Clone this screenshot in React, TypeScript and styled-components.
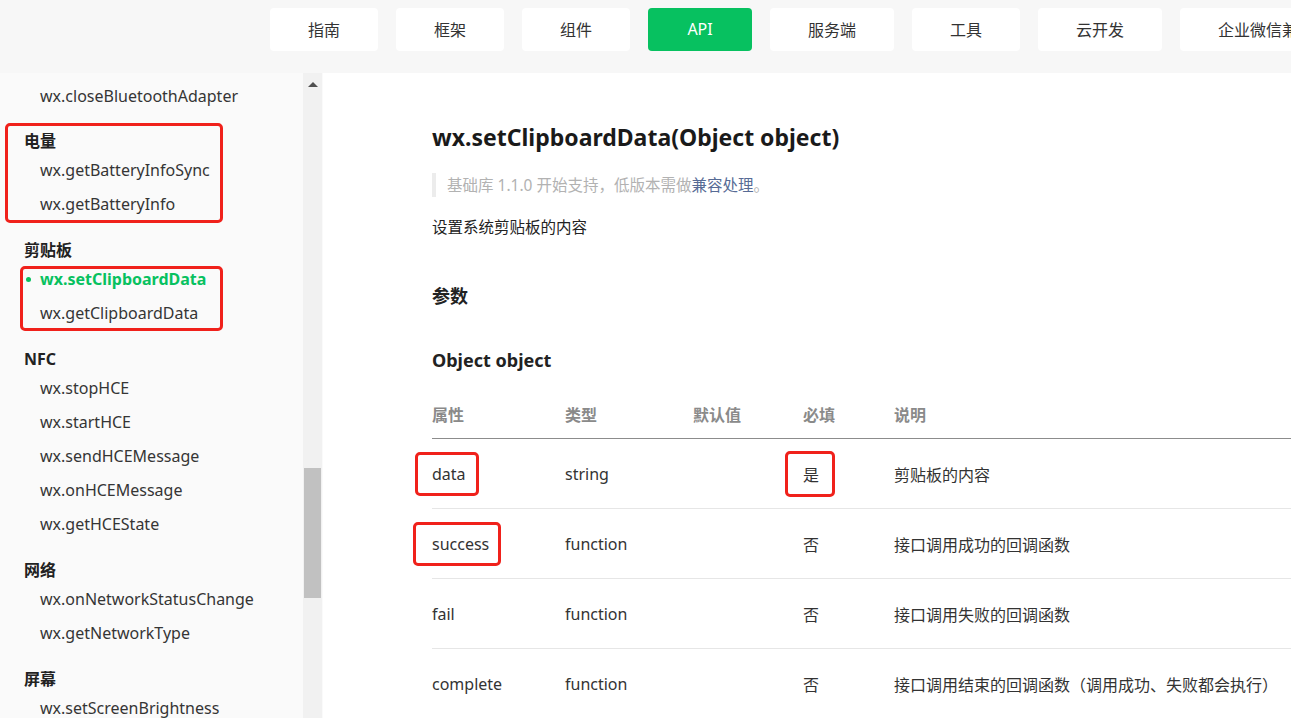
import React from 'react';
import styled, {createGlobalStyle} from 'styled-components';

const GlobalStyle = createGlobalStyle`
  html, body {
    margin: 0;
    padding: 0;
    background: #fff;
  }
  body {
    font-family: "Noto Sans", "Noto Sans CJK SC", sans-serif;
    color: #333;
    overflow: hidden;
  }
`;

const Page = styled.div`
  width: 1291px;
  height: 718px;
  display: flex;
  flex-direction: column;
  overflow: hidden;
`;

const TopNav = styled.nav`
  height: 73px;
  flex: none;
  background: #f7f7f7;
  display: flex;
  align-items: flex-start;
  gap: 18px;
  padding: 8px 0 0 270px;
  box-sizing: border-box;
  white-space: nowrap;
  overflow: hidden;
`;

const NavButton = styled.div<{$active?: boolean}>`
  flex: none;
  height: 43px;
  min-width: 104px;
  padding: 0 38px 1px;
  box-sizing: border-box;
  border-radius: 4px;
  display: flex;
  align-items: center;
  justify-content: center;
  font-size: 16px;
  background: ${p => (p.$active ? '#07c160' : '#fff')};
  color: ${p => (p.$active ? '#fff' : '#333')};
`;

const Body = styled.div`
  flex: 1;
  display: flex;
  min-height: 0;
`;

const SideWrap = styled.aside`
  flex: none;
  width: 323px;
  display: flex;
  background: #fafafa;
  position: relative;
`;

const SideList = styled.div`
  flex: 1;
  padding-top: 6px;
  overflow: hidden;
`;

const Group = styled.div`
  & + & {
    margin-top: 17px;
  }
  &:nth-child(2) {
    margin-top: 16px;
  }
`;

const GroupTitle = styled.div`
  height: 24px;
  line-height: 24px;
  padding-left: 24px;
  font-size: 16px;
  font-weight: 700;
  color: #222;
`;

const Item = styled.div<{$active?: boolean}>`
  height: 34px;
  line-height: 34px;
  padding-left: 40px;
  font-size: 16px;
  position: relative;
  color: ${p => (p.$active ? '#07c160' : '#353535')};
  font-weight: ${p => (p.$active ? 700 : 400)};

  ${p =>
    p.$active &&
    `&::before {
      content: "";
      position: absolute;
      left: 26px;
      top: 15px;
      width: 5px;
      height: 5px;
      border-radius: 50%;
      background: #07c160;
    }`}
`;

const ScrollTrack = styled.div`
  flex: none;
  width: 19px;
  margin-right: 1px;
  background: #f1f1f1;
  display: flex;
  flex-direction: column;
  align-items: center;
`;

const ScrollArrow = styled.div`
  margin-top: 9px;
  width: 0;
  height: 0;
  border-left: 5px solid transparent;
  border-right: 5px solid transparent;
  border-bottom: 5px solid #505050;
`;

const ScrollThumb = styled.div`
  margin-top: 381px;
  width: 17px;
  height: 130px;
  background: #c1c1c1;
`;

const RedBox = styled.div<{$top: number; $left: number; $w: number; $h: number}>`
  position: absolute;
  top: ${p => p.$top}px;
  left: ${p => p.$left}px;
  width: ${p => p.$w}px;
  height: ${p => p.$h}px;
  border: 3px solid #f0211b;
  border-radius: 5px;
  box-sizing: border-box;
  pointer-events: none;
`;

const Main = styled.main`
  flex: 1;
  min-width: 0;
  overflow: hidden;
  background: #fff;
  padding: 48px 0 0 109px;
`;

const Title = styled.h1`
  margin: 0;
  font-size: 23px;
  line-height: 32px;
  font-weight: 700;
  color: #1a1a1a;
  white-space: nowrap;
`;

const Quote = styled.div`
  margin-top: 20px;
  border-left: 4px solid #ececec;
  padding-left: 11px;
  height: 24px;
  line-height: 24px;
  font-size: 15.5px;
  color: #b2b2b2;
`;

const Link = styled.span`
  color: #576b95;
`;

const Desc = styled.p`
  margin: 18px 0 0;
  font-size: 15.5px;
  line-height: 24px;
  color: #222;
`;

const SubHead = styled.h2<{$gap: number}>`
  margin: ${p => p.$gap}px 0 0;
  font-size: 18px;
  line-height: 28px;
  font-weight: 700;
  color: #222;
`;

const Table = styled.div`
  margin-top: 16px;
  width: 1000px;
`;

const Row = styled.div<{$head?: boolean}>`
  display: grid;
  grid-template-columns: 133px 128px 110px 91px 1fr;
  align-items: center;
  height: ${p => (p.$head ? '48px' : '69px')};
  border-bottom: ${p => (p.$head ? '1px solid #8c8c8c' : '1px solid #e6e6e6')};
  font-size: 16px;
  font-weight: ${p => (p.$head ? 600 : 400)};
  color: ${p => (p.$head ? '#8a8a8a' : '#333')};
  white-space: nowrap;
`;

const Cell = styled.div``;

const Marked = styled.span<{$l: number; $r: number}>`
  display: inline-block;
  margin-left: -${p => p.$l + 3}px;
  padding: 8px ${p => p.$r}px 8px ${p => p.$l}px;
  border: 3px solid #f0211b;
  border-radius: 5px;
`;

const navs = ['指南', '框架', '组件', 'API', '服务端', '工具', '云开发', '企业微信兼容'];

const groups = [
  {title: '', items: ['wx.closeBluetoothAdapter']},
  {title: '电量', items: ['wx.getBatteryInfoSync', 'wx.getBatteryInfo']},
  {title: '剪贴板', items: ['wx.setClipboardData', 'wx.getClipboardData']},
  {title: 'NFC', items: ['wx.stopHCE', 'wx.startHCE', 'wx.sendHCEMessage', 'wx.onHCEMessage', 'wx.getHCEState']},
  {title: '网络', items: ['wx.onNetworkStatusChange', 'wx.getNetworkType']},
  {title: '屏幕', items: ['wx.setScreenBrightness']},
];

const rows = [
  {name: 'data', type: 'string', req: '是', desc: '剪贴板的内容'},
  {name: 'success', type: 'function', req: '否', desc: '接口调用成功的回调函数'},
  {name: 'fail', type: 'function', req: '否', desc: '接口调用失败的回调函数'},
  {name: 'complete', type: 'function', req: '否', desc: '接口调用结束的回调函数（调用成功、失败都会执行）'},
];

// red annotation boxes around some cells: [left pad, right pad]
const marks: Record<string, [number, number]> = {
  data: [14, 10],
  success: [16, 9],
};

export default function App() {
  return (
    <Page>
      <GlobalStyle />
      <TopNav>
        {navs.map(n => (
          <NavButton key={n} $active={n === 'API'}>{n}</NavButton>
        ))}
      </TopNav>
      <Body>
        <SideWrap>
          <SideList>
            {groups.map((g, i) => (
              <Group key={i}>
                {g.title && <GroupTitle>{g.title}</GroupTitle>}
                {g.items.map(it => (
                  <Item key={it} $active={it === 'wx.setClipboardData'}>{it}</Item>
                ))}
              </Group>
            ))}
          </SideList>
          <ScrollTrack>
            <ScrollArrow />
            <ScrollThumb />
          </ScrollTrack>
          <RedBox $top={50} $left={5} $w={218} $h={100} />
          <RedBox $top={193} $left={20} $w={203} $h={65} />
        </SideWrap>
        <Main>
          <Title>wx.setClipboardData(Object object)</Title>
          <Quote>
            基础库 1.1.0 开始支持，低版本需做<Link>兼容处理</Link>。
          </Quote>
          <Desc>设置系统剪贴板的内容</Desc>
          <SubHead $gap={43}>参数</SubHead>
          <SubHead $gap={36}>Object object</SubHead>
          <Table>
            <Row $head>
              <Cell>属性</Cell>
              <Cell>类型</Cell>
              <Cell>默认值</Cell>
              <Cell>必填</Cell>
              <Cell>说明</Cell>
            </Row>
            {rows.map(r => (
              <Row key={r.name}>
                <Cell>
                  {marks[r.name] ? (
                    <Marked $l={marks[r.name][0]} $r={marks[r.name][1]}>{r.name}</Marked>
                  ) : (
                    r.name
                  )}
                </Cell>
                <Cell>{r.type}</Cell>
                <Cell />
                <Cell>
                  {r.req === '是' ? <Marked $l={15} $r={13}>{r.req}</Marked> : r.req}
                </Cell>
                <Cell>{r.desc}</Cell>
              </Row>
            ))}
          </Table>
        </Main>
      </Body>
    </Page>
  );
}
